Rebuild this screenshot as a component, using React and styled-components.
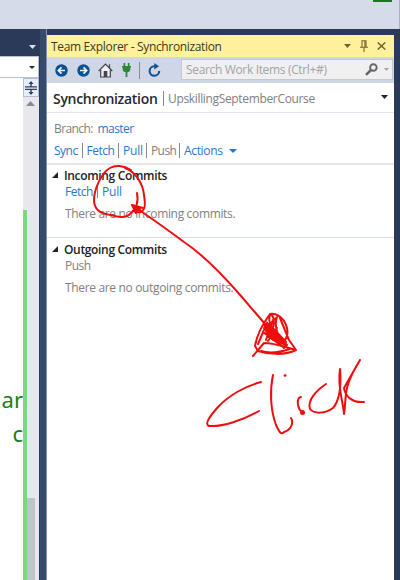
import React from "react";
import styled, { createGlobalStyle } from "styled-components";

const GlobalStyle = createGlobalStyle`
  * { box-sizing: border-box; }
  html, body { margin: 0; padding: 0; overflow: hidden; }
  body { font-family: "Open Sans", "Noto Sans", sans-serif; }
  svg { display: block; flex: none; }
`;

const Screen = styled.div`
  position: relative;
  width: 400px;
  height: 580px;
  overflow: hidden;
  display: flex;
  flex-direction: column;
  background: #2b3a59;
`;

const TopStrip = styled.header`
  flex: none;
  height: 29px;
  display: flex;
  justify-content: flex-end;
  align-items: flex-start;
  padding-right: 7px;
  background: #d6dbe9;
  border-right: 1px solid #a9b1c6;
`;

const GreenBadge = styled.div`
  width: 19px;
  height: 2px;
  background: #108010;
`;

const Workspace = styled.main`
  flex: 1;
  min-height: 0;
  display: flex;
`;

const Editor = styled.section`
  width: 39px;
  display: flex;
  flex-direction: column;
`;

const TabWell = styled.div`
  height: 27px;
  display: flex;
  justify-content: flex-end;
  align-items: center;
  padding: 8px 3px 0 0;
`;

const NavBar = styled.div`
  height: 22px;
  display: flex;
  align-items: center;
  justify-content: flex-end;
  padding-right: 3px;
  background: #fff;
  border: solid #b7bfd3;
  border-width: 1px 1px 1px 0;
`;

const EditorBody = styled.div`
  flex: 1;
  display: flex;
  background: #fff;
`;

const Code = styled.div`
  width: 23px;
  padding: 304px 0 0 0;
  overflow: hidden;
  display: flex;
  flex-direction: column;
  align-items: flex-end;
  font: 22px/34px "Noto Sans", "Open Sans", sans-serif;
  color: #188018;
`;

const Scrollbar = styled.div`
  width: 16px;
  display: flex;
  flex-direction: column;
  background: #e8e8ec;
`;

const Splitter = styled.div`
  height: 19px;
  display: flex;
  align-items: center;
  justify-content: center;
  background: #e6f0fb;
  border: 1px solid #b3bdd3;
`;

const ScrollUp = styled.div`
  height: 113px;
  padding: 4px 0 0 3px;
`;

const Track = styled.div`
  flex: 1;
  display: flex;
  align-items: flex-end;
`;

const ChangeBar = styled.div`
  width: 4px;
  height: 100%;
  background: #7bd97b;
`;

const Thumb = styled.div`
  width: 8px;
  height: 82px;
  background: #c2c3c9;
`;

const Gutter = styled.div`
  width: 8px;
  background: #364a6b;
  border-left: 1px solid #2b3a59;
  border-right: 1px solid #8291b1;
`;

const Panel = styled.aside`
  width: 347px;
  margin-top: 6px;
  display: flex;
  flex-direction: column;
  background: #fff;
`;

const Text = styled.span`
  flex: none;
  width: ${(p) => (p.$w ? p.$w + "px" : "auto")};
  white-space: nowrap;
  font-size: ${(p) => p.$size || 12}px;
  font-weight: ${(p) => p.$weight || 400};
  letter-spacing: ${(p) => (p.$track === undefined ? -0.34 : p.$track)}px;
  color: ${(p) => p.$color || "#808080"};
`;

const TitleBar = styled.div`
  height: 22px;
  display: flex;
  align-items: center;
  padding: 0 8px 0 4px;
  background: #fff29d;
`;

const TitleButtons = styled.div`
  margin-left: auto;
  display: flex;
  align-items: center;
  gap: 9px;
`;

const Toolbar = styled.div`
  height: 26px;
  display: flex;
  align-items: center;
  padding-left: 8px;
  background: #cfd6e5;
`;

const ToolIcons = styled.div`
  width: 126px;
  display: flex;
  align-items: center;
  gap: 8px;
`;

const ToolGroup = styled.div`
  display: flex;
  align-items: center;
  gap: ${(p) => p.$gap}px;
`;

const SearchBox = styled.div`
  height: 21px;
  flex: 1;
  margin: 0 1px 1px 0;
  display: flex;
  align-items: center;
  justify-content: space-between;
  padding: 0 3px 0 4px;
  background: #f0f0f1;
  border: 1px solid #c3c8d3;
`;

const SearchTools = styled.div`
  display: flex;
  align-items: center;
  gap: 6px;
`;

const PageHeader = styled.div`
  height: 30px;
  display: flex;
  align-items: center;
  padding: 2px 6px 0;
  border-bottom: 1px solid #e2e5ed;
`;

const Divider = styled.span`
  flex: none;
  width: 1px;
  height: ${(p) => p.$h || 15}px;
  margin: 0 ${(p) => (p.$gap === undefined ? 4 : p.$gap)}px;
  background: #8a8a8a;
`;

const HeaderCaret = styled.div`
  margin: -4px 0 0 auto;
`;

const BranchArea = styled.div`
  height: 52px;
  padding: 5px 7px 0;
  border-bottom: 2px solid #e6e8ec;
`;

const Row = styled.div`
  height: ${(p) => p.$h}px;
  display: flex;
  align-items: center;
`;

const Section = styled.section`
  height: ${(p) => p.$h}px;
  padding: ${(p) => p.$top}px 0 0 5px;
  border-bottom: ${(p) => (p.$line ? "1px solid #d5dcea" : "none")};
`;

const SectionTitle = styled.div`
  height: 16px;
  display: flex;
  align-items: center;
  gap: 6px;
`;

const Indent = styled.div`
  padding-left: 13px;
`;

const Ink = styled.svg`
  position: absolute;
  inset: 0;
  pointer-events: none;
`;

const link = "#2878cc";

const Caret = ({ color, w = 7, h = 4 }) => (
  <svg width={w} height={h} viewBox="0 0 8 4" preserveAspectRatio="none">
    <path d="M0 0H8L4 4Z" fill={color} />
  </svg>
);

const NavArrow = ({ flip }) => (
  <svg width="13" height="13" viewBox="0 0 13 13">
    <g transform={flip ? "translate(13 0) scale(-1 1)" : undefined}>
      <circle cx="6.5" cy="6.5" r="6.2" fill="#0b4f94" />
      <path d="M10 6.5H3.5M6.5 3.3L3.3 6.5L6.5 9.7" fill="none" stroke="#edf3fb" strokeWidth="1.7" />
    </g>
  </svg>
);

const HomeIcon = () => (
  <svg width="15" height="15" viewBox="0 0 15 15">
    <path d="M2.7 7V14H12.3V7L7.5 2.3Z" fill="#eef0f5" />
    <path d="M.7 8L7.5 1.2L14.3 8M11.5 5V1.3M2.7 7V14H12.3V7" fill="none" stroke="#45464b" strokeWidth="1.2" />
    <path d="M5.7 8H9.3V14H5.7Z" fill="#45464b" />
  </svg>
);

const PlugIcon = () => (
  <svg width="9" height="14" viewBox="0 0 9 14">
    <path d="M1.5 0H3.2V3H5.8V0H7.5V3H9V4.5H8.3V7Q8 9 5.4 9.3V14H3.6V9.3Q1 9 .7 7V4.5H0V3H1.5Z" fill="#318536" />
  </svg>
);

const RefreshIcon = () => (
  <svg width="13" height="14" viewBox="0 0 13 14">
    <path d="M7.5 3.2H6.3A4.8 4.8 0 1 0 11.2 8" fill="none" stroke="#0b5398" strokeWidth="2.1" />
    <path d="M6.3 0L11 3.2L6.3 6.6Z" fill="#0b5398" />
  </svg>
);

const PinIcon = () => (
  <svg width="8" height="12" viewBox="0 0 8 12">
    <path d="M2 7V.7H6V7M0 7.3H8M4 7V12" fill="none" stroke="#75632b" strokeWidth="1.1" />
    <path d="M5 1V7" stroke="#75632b" strokeWidth="1.3" />
  </svg>
);

const CloseIcon = () => (
  <svg width="9" height="8" viewBox="0 0 9 8">
    <path d="M.7 .4L8.3 7.6M8.3 .4L.7 7.6" stroke="#75632b" strokeWidth="1.4" />
  </svg>
);

const SearchIcon = () => (
  <svg width="13" height="13" viewBox="0 0 13 13">
    <circle cx="8.4" cy="4.5" r="3.3" fill="none" stroke="#65656a" strokeWidth="1.9" />
    <path d="M6 7L1 11.8" stroke="#65656a" strokeWidth="2.5" />
  </svg>
);

const SplitIcon = () => (
  <svg width="12" height="14" viewBox="0 0 12 14">
    <path d="M6 0L8.6 3H6.7V5.3H12V6.6H0V5.3H5.3V3H3.4ZM0 7.8H12V9H6.7V11H8.6L6 14L3.4 11H5.3V9H0Z" fill="#34415a" />
  </svg>
);

const ScrollArrow = () => (
  <svg width="9" height="5" viewBox="0 0 9 5">
    <path d="M0 5L4.5 0L9 5Z" fill="#868999" />
  </svg>
);

const Expander = () => (
  <svg width="6" height="6" viewBox="0 0 6 6">
    <path d="M6 0V6H0Z" fill="#222" />
  </svg>
);

const Annotation = () => (
  <Ink width="400" height="580" viewBox="0 0 400 580" fill="none" stroke="#ee0e0e" strokeWidth="2" strokeLinecap="round" strokeLinejoin="round">
    <path d="M131 170C123 165 115 165 110 168C101 173 94 190 94 200C94 210 101 214 111 215C120 218 126 218 130 214C135 210 139 203 137 193" />
    <path d="M125 168C136 172 143 184 144 195C145 201 146 208 143 210C141 213 138 213 134 211" />
    <path d="M132 205L143 208M132 205L136 213M132 205C151 218 168 230 184 242C205 256 222 274 241 296L272 332" />
    <path d="M133 206L140 209L136 211Z" fill="#ee0e0e" />
    <path d="M253 356L264 343C276 343 287 348 296 350C284 356 267 354 258 351L255 346C257 334 264 322 270 314C276 313 283 317 286 325C289 332 287 338 284 341C277 337 274 325 277 317M270 315C266 325 280 342 286 346M271 314C275 318 275 327 270 332L264 325M280 318L289 340L296 350M276 318L264 330L258 344M266 324L287 345M264 328L284 348M263 332L279 344M269 324L286 342M273 320L266 340M277 328L268 341M261 351C270 354 281 352 290 349" />
    <path d="M267 322L274 331L286 345L272 340L266 333Z" fill="#ee0e0e" strokeWidth="1" />
    <path d="M261 382C246 386 229 395 218 407C210 416 204 424 209 426C223 427 243 420 259 411" />
    <path d="M273 375C270 389 270 409 276 425C280 433 281 435 284 432C291 430 294 423 291 418" />
    <path d="M285 375.5H285.2" strokeWidth="2.7" />
    <path d="M301 397C296 398 297 409 303 413" />
    <circle cx="302.5" cy="412.5" r="1.5" fill="#ee0e0e" />
    <path d="M326 384C317 390 307 400 310 409C314 414 325 414 333 408C341 399 341 382 340 369C337 387 343 400 344 414C347 396 342 389 360 360L344 388C345 396 352 403 364 402" />
  </Ink>
);

export default function App() {
  return (
    <Screen>
      <GlobalStyle />
      <TopStrip><GreenBadge /></TopStrip>
      <Workspace>
        <Editor>
          <TabWell><Caret color="#dde1ed" /></TabWell>
          <NavBar><Caret color="#262626" w={6} h={3} /></NavBar>
          <EditorBody>
            <Code><span>ar</span><span>c</span></Code>
            <Scrollbar>
              <Splitter><SplitIcon /></Splitter>
              <ScrollUp><ScrollArrow /></ScrollUp>
              <Track><ChangeBar /><Thumb /></Track>
            </Scrollbar>
          </EditorBody>
        </Editor>
        <Gutter />
        <Panel>
          <TitleBar>
            <Text $color="#3c3820">Team Explorer - Synchronization</Text>
            <TitleButtons><Caret color="#75632b" /><PinIcon /><CloseIcon /></TitleButtons>
          </TitleBar>
          <Toolbar>
            <ToolIcons>
              <ToolGroup $gap={9}><NavArrow /><NavArrow flip /></ToolGroup>
              <ToolGroup $gap={9}><HomeIcon /><PlugIcon /></ToolGroup>
              <ToolGroup $gap={8}><Divider $gap={0} $h={17} /><RefreshIcon /></ToolGroup>
            </ToolIcons>
            <SearchBox>
              <Text $color="#a2a3a7">Search Work Items (Ctrl+#)</Text>
              <SearchTools><SearchIcon /><Caret color="#a3a5ab" w={5} h={3} /></SearchTools>
            </SearchBox>
          </Toolbar>
          <PageHeader>
            <Text $w={106} $size={14} $weight={600} $track={-0.3} $color="#252934">Synchronization</Text>
            <Divider $gap={4} />
            <Text $track={-0.34}>UpskillingSeptemberCourse</Text>
            <HeaderCaret><Caret color="#20232e" /></HeaderCaret>
          </PageHeader>
          <BranchArea>
            <Row $h={21}><Text $w={43.5} $track={-0.6}>Branch:</Text><Text $track={-0.55} $color={link}>master</Text></Row>
            <Row $h={23}>
              <Text $w={23.5} $track={-0.5} $color={link}>Sync</Text><Divider />
              <Text $w={27.5} $track={-0.5} $color={link}>Fetch</Text><Divider />
              <Text $w={19} $track={-0.2} $color={link}>Pull</Text><Divider />
              <Text $w={24} $track={-0.6}>Push</Text><Divider />
              <Text $w={45} $color={link}>Actions</Text><Caret color="#1976c9" w={8} />
            </Row>
          </BranchArea>
          <Section $h={73} $top={2} $line>
            <SectionTitle><Expander /><Text $weight={600} $color="#222">Incoming Commits</Text></SectionTitle>
            <Indent>
              <Row $h={16}><Text $w={28} $track={-0.5} $color={link}>Fetch</Text><Divider $gap={4} $h={13} /><Text $track={-0.2} $color={link}>Pull</Text></Row>
              <Row $h={28}><Text>There are no incoming commits.</Text></Row>
            </Indent>
          </Section>
          <Section $h={100} $top={3}>
            <SectionTitle><Expander /><Text $weight={600} $color="#222">Outgoing Commits</Text></SectionTitle>
            <Indent>
              <Row $h={16}><Text $track={-0.5}>Push</Text></Row>
              <Row $h={28}><Text>There are no outgoing commits.</Text></Row>
            </Indent>
          </Section>
        </Panel>
      </Workspace>
      <Annotation />
    </Screen>
  );
}
